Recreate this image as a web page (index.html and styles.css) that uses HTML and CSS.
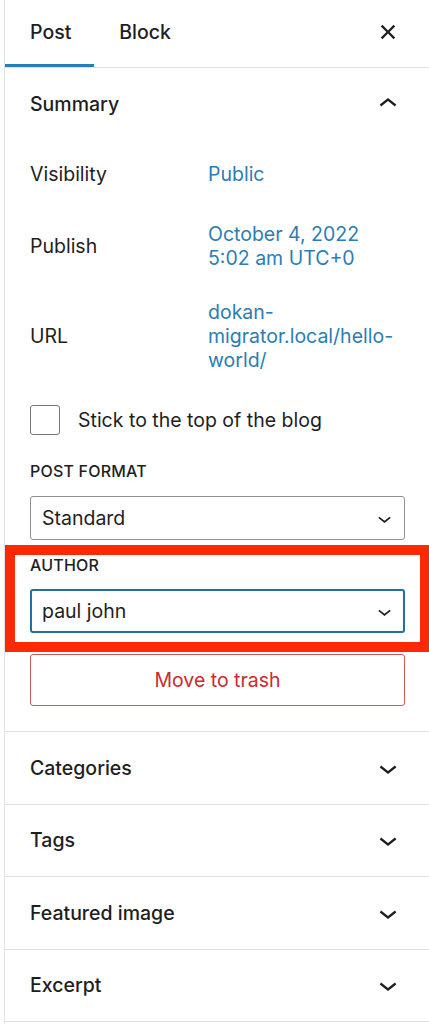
FILE: index.html
```html
<!DOCTYPE html>
<html lang="en">
<head>
<meta charset="utf-8">
<title>Post settings</title>
<link rel="stylesheet" href="styles.css">
</head>
<body>
<div class="sidebar">
  <div class="tabs">
    <div class="tab active">Post</div>
    <div class="tab">Block</div>
    <div class="spacer"></div>
    <div class="icon-btn">
      <svg viewBox="0 0 24 24" width="36" height="36"><path d="M12 13.06l3.712 3.713 1.061-1.06L13.061 12l3.712-3.712-1.06-1.06L12 10.938 8.288 7.227l-1.061 1.06L10.939 12l-3.712 3.712 1.06 1.061L12 13.061z"/></svg>
    </div>
  </div>

  <section class="panel">
    <div class="panel-head">
      <span class="panel-title">Summary</span>
      <svg class="chev" viewBox="0 0 24 24" width="36" height="36"><path d="M6.5 12.4L12 8l5.5 4.4-.9 1.2L12 10l-4.6 3.6-.9-1.2z"/></svg>
    </div>
    <div class="panel-body">
      <div class="row row-visibility">
        <span class="label">Visibility</span>
        <span class="value">Public</span>
      </div>
      <div class="row row-publish">
        <span class="label">Publish</span>
        <span class="value">October 4, 2022<br>5:02 am UTC+0</span>
      </div>
      <div class="row row-url">
        <span class="label">URL</span>
        <span class="value">dokan-<br>migrator.local/hello-<br>world/</span>
      </div>
      <div class="check-row">
        <span class="checkbox"></span>
        <span class="check-label">Stick to the top of the blog</span>
      </div>
      <div class="field-label fmt-label">POST FORMAT</div>
      <div class="select">
        <span>Standard</span>
        <svg viewBox="0 0 24 24" width="27" height="27"><path d="M17.5 11.6L12 16l-5.5-4.4.9-1.2L12 14l4.6-3.6 1 1.2z"/></svg>
      </div>
      <div class="highlight">
        <div class="field-label author-label">AUTHOR</div>
        <div class="select focused">
          <span>paul john</span>
          <svg viewBox="0 0 24 24" width="27" height="27"><path d="M17.5 11.6L12 16l-5.5-4.4.9-1.2L12 14l4.6-3.6 1 1.2z"/></svg>
        </div>
      </div>
      <div class="trash">Move to trash</div>
    </div>
  </section>

  <section class="panel closed">
    <div class="panel-head">
      <span class="panel-title">Categories</span>
      <svg class="chev" viewBox="0 0 24 24" width="36" height="36"><path d="M17.5 11.6L12 16l-5.5-4.4.9-1.2L12 14l4.6-3.6 1 1.2z"/></svg>
    </div>
  </section>
  <section class="panel closed">
    <div class="panel-head">
      <span class="panel-title">Tags</span>
      <svg class="chev" viewBox="0 0 24 24" width="36" height="36"><path d="M17.5 11.6L12 16l-5.5-4.4.9-1.2L12 14l4.6-3.6 1 1.2z"/></svg>
    </div>
  </section>
  <section class="panel closed">
    <div class="panel-head">
      <span class="panel-title">Featured image</span>
      <svg class="chev" viewBox="0 0 24 24" width="36" height="36"><path d="M17.5 11.6L12 16l-5.5-4.4.9-1.2L12 14l4.6-3.6 1 1.2z"/></svg>
    </div>
  </section>
  <section class="panel closed">
    <div class="panel-head">
      <span class="panel-title">Excerpt</span>
      <svg class="chev" viewBox="0 0 24 24" width="36" height="36"><path d="M17.5 11.6L12 16l-5.5-4.4.9-1.2L12 14l4.6-3.6 1 1.2z"/></svg>
    </div>
  </section>
</div>
</body>
</html>
```

FILE: styles.css
```css
* { box-sizing: border-box; }
html, body {
  margin: 0;
  padding: 0;
  background: #fff;
  overflow: hidden;
}
body {
  font-family: Inter, "Noto Sans", "Liberation Sans", sans-serif;
  font-size: 19.5px;
  color: #1e1e1e;
  line-height: 24px;
}
svg { fill: #1e1e1e; display: block; }

.sidebar {
  margin-left: 4px;
  width: 425px;
  border-left: 1px solid #e2e2e2;
  min-height: 1024px;
}

.tabs {
  display: flex;
  align-items: stretch;
  height: 68px;
  border-bottom: 1px solid #e0e0e0;
}
.tab {
  position: relative;
  display: flex;
  align-items: center;
  padding: 0 23px 3px 25px;
  font-weight: 500;
}
.tab.active::after {
  content: "";
  position: absolute;
  left: 0;
  right: 0;
  bottom: 0;
  height: 3px;
  background: #2b7db3;
}
.spacer { flex: 1; }
.icon-btn {
  display: flex;
  align-items: center;
  padding: 0 23px 3px 0;
}

.panel { border-bottom: 1px solid #e0e0e0; }
.panel-head {
  height: 72px;
  display: flex;
  align-items: center;
  justify-content: space-between;
  padding: 0 23px 0 25px;
}
.panel.closed .panel-head { height: 71.5px; }
.panel-title { font-weight: 500; }

.panel-body {
  padding: 0 24px 25px 25px;
  display: flex;
  flex-direction: column;
}
.row {
  display: flex;
  align-items: center;
}
.row-visibility { margin-top: 10px; height: 48px; }
.row-publish { margin-top: 24px; height: 48px; }
.row-url { margin-top: 30px; height: 72px; }
.label { width: 178px; flex: none; }
.value { color: #2b7db3; }

.check-row {
  margin-top: 24px;
  height: 48px;
  display: flex;
  align-items: center;
  gap: 18px;
}
.checkbox {
  width: 30px;
  height: 30px;
  border: 1.5px solid #767676;
  border-radius: 3px;
  flex: none;
}

.field-label {
  font-size: 16px;
  font-weight: 500;
  line-height: 20px;
  letter-spacing: 0.2px;
}
.fmt-label { margin-top: 17px; }
.select {
  margin-top: 15px;
  height: 44px;
  border: 1px solid #8f8f8f;
  border-radius: 3px;
  display: flex;
  align-items: center;
  justify-content: space-between;
  padding: 0 6px 0 11px;
}
.select.focused {
  margin-top: 14px;
  border: 2px solid #266f9a;
  padding-left: 10px;
  padding-right: 5px;
}

.highlight {
  margin: 5px -25px 0 -25px;
  border: 10px solid #fb2a06;
  padding: 0 15px 9px 15px;
}
.author-label { margin-top: 0; }

.trash {
  margin-top: 2px;
  height: 52px;
  border: 1px solid #d2575a;
  border-radius: 3px;
  color: #cc2a30;
  display: flex;
  align-items: center;
  justify-content: center;
}
```
